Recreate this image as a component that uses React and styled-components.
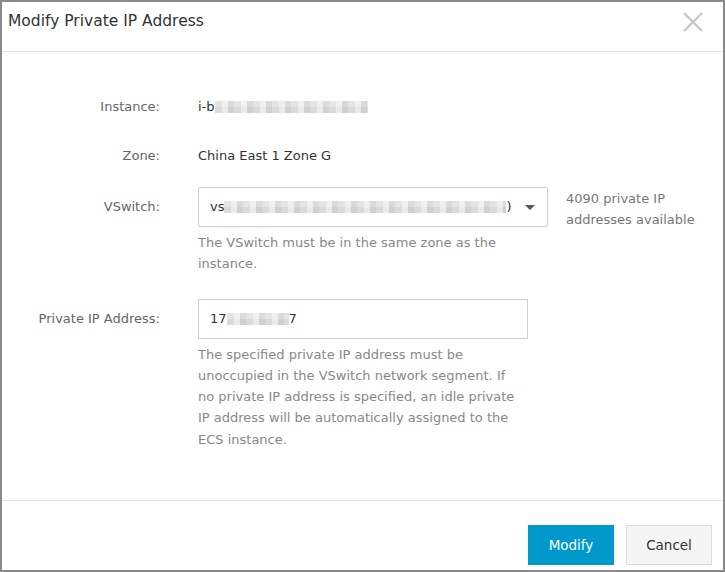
import React from "react";
import styled, { createGlobalStyle } from "styled-components";

const GlobalStyle = createGlobalStyle`
  html, body {
    margin: 0;
    padding: 0;
    background: #fff;
  }
  body {
    font-family: "DejaVu Sans", Tahoma, "Liberation Sans", sans-serif;
    font-size: 13px;
    color: #333;
  }
`;

const Dialog = styled.div`
  box-sizing: border-box;
  width: 725px;
  height: 572px;
  border: 2px solid #8a8a8a;
  background: #fff;
  display: flex;
  flex-direction: column;
`;

const Header = styled.div`
  height: 50px;
  border-bottom: 1px solid #e3e3e3;
  display: flex;
  justify-content: space-between;
  padding: 7px 19px 0 6px;
  box-sizing: border-box;
`;

const Title = styled.h3`
  margin: 0;
  font-size: 15.5px;
  font-weight: normal;
  color: #333;
  line-height: 24px;
`;

const CloseButton = styled.button`
  border: none;
  background: none;
  padding: 0;
  margin-top: 2px;
  width: 22px;
  height: 22px;
  cursor: pointer;
`;

const Body = styled.div`
  flex: 1;
  padding-top: 35px;
`;

const FormItem = styled.div`
  display: grid;
  grid-template-columns: 158px 1fr;
  column-gap: 38px;
  margin-bottom: ${({ $gap }) => $gap ?? 10}px;
`;

const Label = styled.div`
  text-align: right;
  line-height: 40px;
  color: #666;
`;

const Control = styled.div`
  display: flex;
  flex-direction: column;
`;

const ControlLine = styled.div`
  display: flex;
  align-items: flex-start;
  gap: 18px;
  height: 40px;
`;

const Value = styled.div`
  line-height: 40px;
  color: #333;
  display: flex;
  align-items: center;
`;

const Redacted = styled.span`
  display: inline-block;
  height: 12px;
  width: ${({ $w }) => $w}px;
  background:
    repeating-linear-gradient(90deg, rgba(255,255,255,0) 0 7px, rgba(255,255,255,0.45) 7px 13px, rgba(0,0,0,0.05) 13px 19px),
    linear-gradient(180deg, #e2e2e2 0 50%, #d6d6d6 50% 100%);
  opacity: 0.9;
`;

const Select = styled.div`
  box-sizing: border-box;
  flex: none;
  width: 350px;
  height: 40px;
  border: 1px solid #d0d0d0;
  border-radius: 2px;
  box-shadow: 0 1px 1px rgba(0, 0, 0, 0.06);
  display: flex;
  align-items: center;
  justify-content: space-between;
  padding: 0 12px 0 11px;
  color: #333;
`;

const Caret = styled.span`
  width: 0;
  height: 0;
  border-left: 5px solid transparent;
  border-right: 5px solid transparent;
  border-top: 5px solid #555;
`;

const Input = styled.div`
  box-sizing: border-box;
  width: 330px;
  height: 40px;
  border: 1px solid #cfcfcf;
  display: flex;
  align-items: center;
  padding: 0 11px;
  color: #333;
`;

const SideNote = styled.div`
  color: #777;
  line-height: 21px;
  padding-top: 1px;
`;

const Help = styled.div`
  width: ${({ $w }) => $w}px;
  color: #888;
  line-height: 21.3px;
  margin-top: 5px;
`;

const Footer = styled.div`
  border-top: 1px solid #e3e3e3;
  height: 70px;
  box-sizing: border-box;
  padding: 24px 11px 0;
  display: flex;
  justify-content: flex-end;
  gap: 12px;
`;

const Button = styled.button`
  box-sizing: border-box;
  width: 86px;
  height: 40px;
  font-family: inherit;
  font-size: 13.5px;
  cursor: pointer;
  border: 1px solid ${({ $primary }) => ($primary ? "#0099cc" : "#dcdcdc")};
  background: ${({ $primary }) => ($primary ? "#0099cc" : "#f5f5f5")};
  color: ${({ $primary }) => ($primary ? "#fff" : "#333")};
`;

const CloseIcon = () => (
  <svg width="22" height="22" viewBox="0 0 22 22">
    <path d="M2 2 L20 20 M20 2 L2 20" stroke="#c6c6c6" strokeWidth="2.4" />
  </svg>
);

export default function App() {
  return (
    <>
      <GlobalStyle />
      <Dialog>
        <Header>
          <Title>Modify Private IP Address</Title>
          <CloseButton aria-label="Close">
            <CloseIcon />
          </CloseButton>
        </Header>
        <Body>
          <FormItem $gap={9}>
            <Label>Instance:</Label>
            <Value>
              i-b<Redacted $w={153} />
            </Value>
          </FormItem>
          <FormItem $gap={11}>
            <Label>Zone:</Label>
            <Value>China East 1 Zone G</Value>
          </FormItem>
          <FormItem $gap={24}>
            <Label>VSwitch:</Label>
            <Control>
              <ControlLine>
                <Select>
                  <Value>
                    vs<Redacted $w={282} />)
                  </Value>
                  <Caret />
                </Select>
                <SideNote>
                  4090 private IP
                  <br />
                  addresses available
                </SideNote>
              </ControlLine>
              <Help $w={350}>The VSwitch must be in the same zone as the instance.</Help>
            </Control>
          </FormItem>
          <FormItem>
            <Label>Private IP Address:</Label>
            <Control>
              <Input>
                17<Redacted $w={62} />7
              </Input>
              <Help $w={340}>
                The specified private IP address must be
                <br />
                unoccupied in the VSwitch network segment. If
                <br />
                no private IP address is specified, an idle private
                <br />
                IP address will be automatically assigned to the
                <br />
                ECS instance.
              </Help>
            </Control>
          </FormItem>
        </Body>
        <Footer>
          <Button $primary>Modify</Button>
          <Button>Cancel</Button>
        </Footer>
      </Dialog>
    </>
  );
}
